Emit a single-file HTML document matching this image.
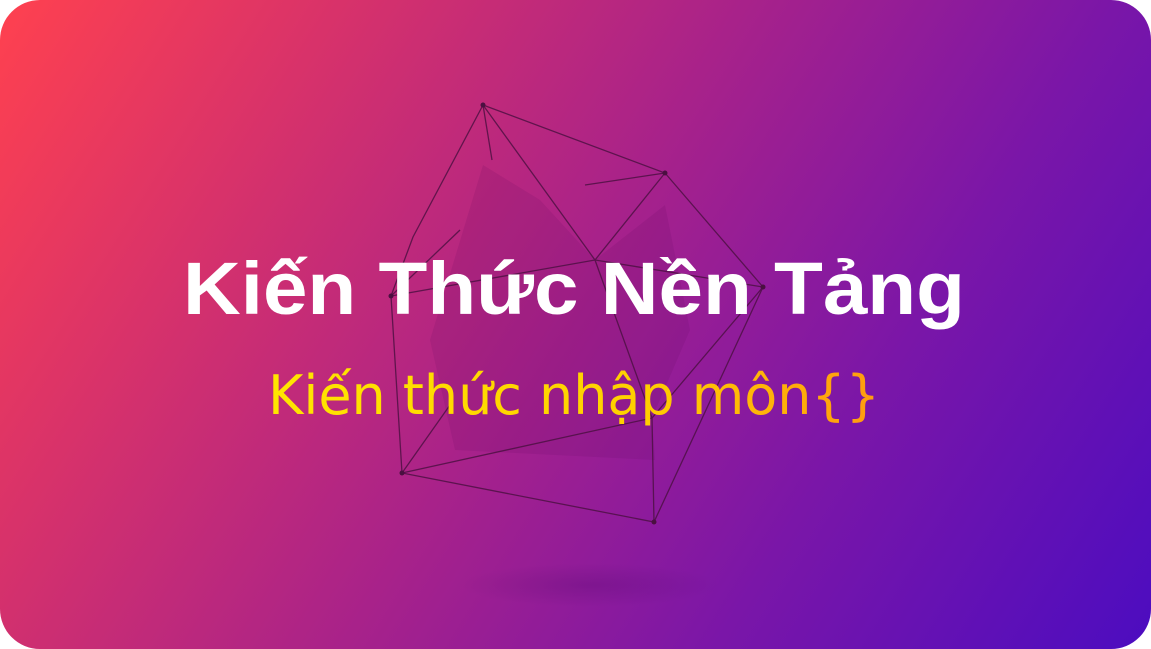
<!DOCTYPE html>
<html><head><meta charset="utf-8"><style>
html,body{margin:0;padding:0;background:#fff;width:1151px;height:649px;overflow:hidden}
.card{position:absolute;left:0;top:0;width:1151px;height:649px;border-radius:40px;overflow:hidden;
background:linear-gradient(122deg,#ff414f 0%,#d8326a 22%,#a8228a 48%,#7a16a8 72%,#4c0cc0 100%)}
svg{position:absolute;left:0;top:0}
</style></head><body>
<div class="card">
<svg width="1151" height="649" viewBox="0 0 1151 649">
<defs>
<linearGradient id="y" x1="0" x2="1"><stop offset="0" stop-color="#ffe600"/><stop offset="0.6" stop-color="#ffd000"/><stop offset="1" stop-color="#ff9a10"/></linearGradient>
<radialGradient id="sh" cx="0.5" cy="0.5" r="0.5"><stop offset="0" stop-color="#400060" stop-opacity="0.2"/><stop offset="1" stop-color="#400060" stop-opacity="0"/></radialGradient>
</defs>
<ellipse cx="590" cy="585" rx="130" ry="22" fill="url(#sh)"/>
<polygon points="483,165 540,200 595,260 665,205 690,330 652,418 655,460 455,450 430,340" fill="#5a0a5a" opacity="0.13"/>
<g stroke="#4a1040" stroke-width="1.3" fill="none" opacity="0.8">
<path d="M483,105 L665,173 L763,287 L654,522 L402,473 L391,296 L413,237 L483,105"/>
<path d="M483,105 L595,260 L665,173"/>
<path d="M391,296 L595,260 L763,287"/>
<path d="M595,260 L652,418 L654,522"/>
<path d="M402,473 L652,418 L763,287"/>
<path d="M483,105 L492,160"/>
<path d="M585,185 L665,173"/>
<path d="M402,473 L450,405"/>
<path d="M391,296 L460,230"/>
</g>
<g fill="#4a1040"><circle cx="483" cy="105" r="2.5"/><circle cx="665" cy="173" r="2.5"/><circle cx="763" cy="287" r="2.5"/><circle cx="391" cy="296" r="2.5"/><circle cx="402" cy="473" r="2.5"/><circle cx="654" cy="522" r="2.5"/></g>
<text x="183" y="314" textLength="782" lengthAdjust="spacingAndGlyphs" font-family="Liberation Sans, sans-serif" font-weight="bold" font-size="74" fill="#fff">Kiến Thức Nền Tảng</text>
<text x="268" y="414" textLength="612" lengthAdjust="spacingAndGlyphs" font-family="DejaVu Sans Condensed, Liberation Sans, sans-serif" font-size="54" fill="url(#y)">Kiến thức nhập môn{}</text>
</svg>
</div>
</body></html>
